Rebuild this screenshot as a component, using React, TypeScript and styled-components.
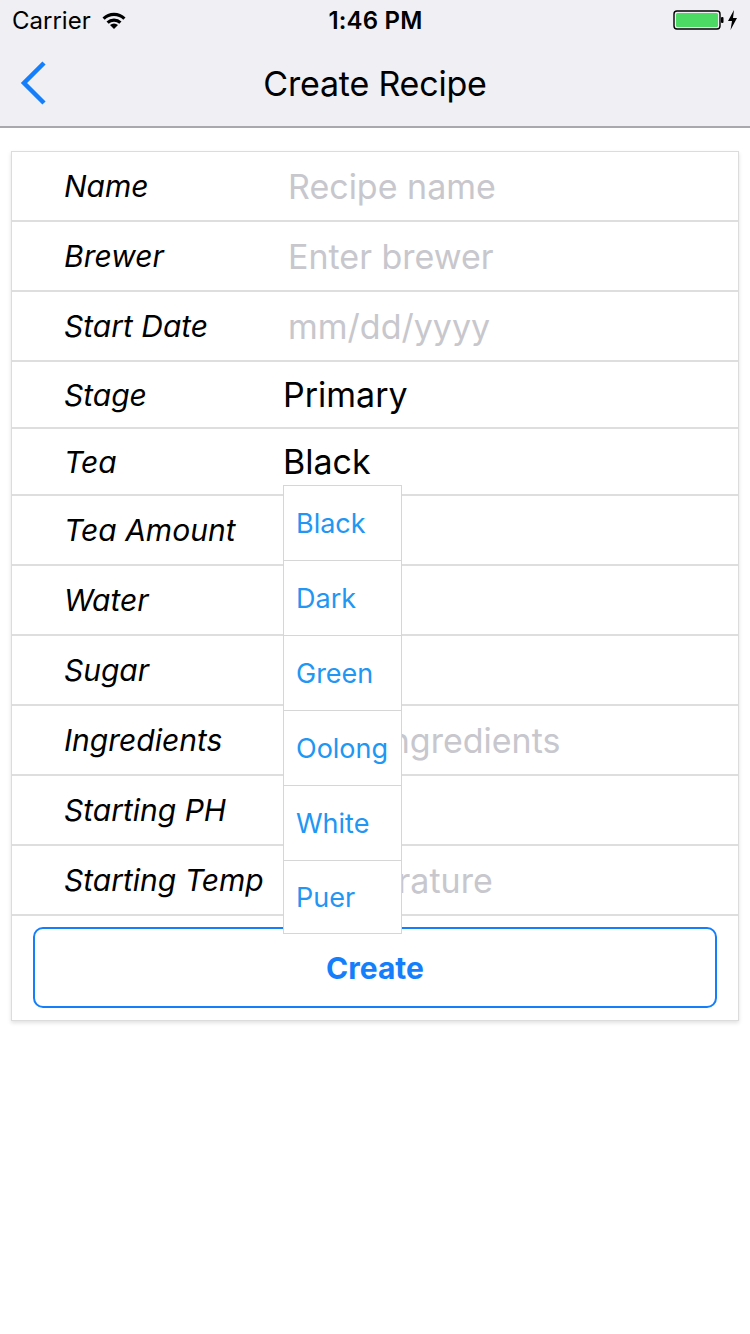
import styled, { createGlobalStyle } from "styled-components";

const GlobalStyle = createGlobalStyle`
  html, body {
    margin: 0;
    padding: 0;
    background: #ffffff;
    font-family: Inter, "Noto Sans", "Liberation Sans", sans-serif;
  }
  * { box-sizing: border-box; }
`;

const BLUE = "#147efb";
const MENU_BLUE = "#2196f3";

const Screen = styled.div`
  width: 750px;
  min-height: 1334px;
  background: #fff;
`;

const Header = styled.header`
  background: #efeff4;
  border-bottom: 2px solid #a9a9ad;
`;

const StatusBar = styled.div`
  height: 40px;
  display: grid;
  grid-template-columns: 1fr auto 1fr;
  align-items: center;
  padding: 0 11px 0 12px;
  font-size: 24px;
  color: #000;
`;

const Carrier = styled.div`
  display: flex;
  align-items: center;
  gap: 10px;
`;

const Clock = styled.div`
  font-weight: 600;
  font-size: 24px;
  letter-spacing: 0.2px;
`;

const Power = styled.div`
  display: flex;
  justify-content: flex-end;
  align-items: center;
  gap: 6px;
`;

const NavBar = styled.div`
  height: 86px;
  display: grid;
  grid-template-columns: 80px 1fr 80px;
  align-items: center;
`;

const BackButton = styled.button`
  border: 0;
  background: none;
  padding: 0 0 0 18px;
  height: 50px;
  display: flex;
  align-items: center;
  cursor: pointer;
`;

const Title = styled.h1`
  margin: 0;
  text-align: center;
  font-size: 34px;
  font-weight: 400;
  color: #000;
  letter-spacing: -0.2px;
`;

const Content = styled.main`
  padding: 23px 11px 0;
`;

const Card = styled.section`
  border: 1px solid #dcdcdc;
  background: #fff;
  box-shadow: 0 2px 4px rgba(0, 0, 0, 0.12);
`;

const Row = styled.div<{ $h: number }>`
  display: grid;
  grid-template-columns: 271px 1fr;
  align-items: center;
  height: ${(p) => p.$h}px;
  border-bottom: 2px solid #dedede;
`;

const Label = styled.div`
  padding-left: 52px;
  font-size: 30px;
  font-style: italic;
  color: #000;
  white-space: nowrap;
`;

const Input = styled.input`
  border: 0;
  outline: none;
  background: transparent;
  font-family: inherit;
  font-size: 34px;
  padding: 0 0 0 5px;
  width: 100%;
  color: #000;
  &::placeholder {
    color: #c7c7cd;
  }
`;

const SelectCell = styled.div`
  position: relative;
  height: 100%;
  display: flex;
  align-items: center;
`;

const Value = styled.div`
  font-size: 34px;
  color: #000;
`;

const Menu = styled.ul`
  position: absolute;
  left: 0;
  top: 56px;
  width: 119px;
  margin: 0;
  padding: 0;
  list-style: none;
  background: #fff;
  border: 1px solid #d6d6d6;
  z-index: 5;
`;

const MenuItem = styled.li`
  height: 75px;
  display: flex;
  align-items: center;
  padding-left: 12px;
  font-size: 27px;
  color: ${MENU_BLUE};
  border-bottom: 1px solid #d6d6d6;
  &:last-child {
    height: 72px;
    border-bottom: 0;
  }
`;

const Actions = styled.div`
  padding: 11px 21px 12px;
`;

const CreateButton = styled.button`
  width: 100%;
  height: 81px;
  border: 2px solid ${BLUE};
  border-radius: 10px;
  background: #fff;
  color: ${BLUE};
  font-family: inherit;
  font-size: 30px;
  font-weight: 700;
  cursor: pointer;
`;

const WifiIcon = () => (
  <svg width="26" height="20" viewBox="0 0 26 20">
    <path d="M13 19 L9 15 A6 6 0 0 1 17 15 Z" fill="#000" />
    <path d="M5.5 11.5 A11 11 0 0 1 20.5 11.5 L18.3 13.7 A8 8 0 0 0 7.7 13.7 Z" fill="#000" />
    <path d="M1.5 7.5 A16.5 16.5 0 0 1 24.5 7.5 L22.3 9.7 A13.5 13.5 0 0 0 3.7 9.7 Z" fill="#000" />
  </svg>
);

const Battery = () => (
  <svg width="66" height="22" viewBox="0 0 66 22">
    <rect x="1" y="2" width="46" height="18" rx="3" fill="none" stroke="#000" strokeWidth="1.4" />
    <rect x="3" y="4" width="42" height="14" rx="1.5" fill="#4cd964" />
    <rect x="48" y="8" width="2.5" height="6" rx="1" fill="#000" />
    <path d="M61 1 L55 12 H59 L57.5 21 L64 9 H60 Z" fill="#000" />
  </svg>
);

const Chevron = () => (
  <svg width="30" height="44" viewBox="0 0 30 44">
    <polyline points="26,2 6,22 26,42" fill="none" stroke={BLUE} strokeWidth="4.5" />
  </svg>
);

const textFields = [
  { label: "Name", placeholder: "Recipe name" },
  { label: "Brewer", placeholder: "Enter brewer" },
  { label: "Start Date", placeholder: "mm/dd/yyyy" },
];

const lowerFields = [
  { label: "Tea Amount", placeholder: "" },
  { label: "Water", placeholder: "" },
  { label: "Sugar", placeholder: "" },
  { label: "Ingredients", placeholder: "Enter ingredients" },
  { label: "Starting PH", placeholder: "" },
  { label: "Starting Temp", placeholder: "Temperature" },
];

const teas = ["Black", "Dark", "Green", "Oolong", "White", "Puer"];

export default function App() {
  return (
    <Screen>
      <GlobalStyle />
      <Header>
        <StatusBar>
          <Carrier>
            Carrier
            <WifiIcon />
          </Carrier>
          <Clock>1:46 PM</Clock>
          <Power>
            <Battery />
          </Power>
        </StatusBar>
        <NavBar>
          <BackButton aria-label="Back">
            <Chevron />
          </BackButton>
          <Title>Create Recipe</Title>
          <div />
        </NavBar>
      </Header>
      <Content>
        <Card>
          {textFields.map((f) => (
            <Row key={f.label} $h={70}>
              <Label>{f.label}</Label>
              <Input placeholder={f.placeholder} />
            </Row>
          ))}
          <Row $h={67}>
            <Label>Stage</Label>
            <SelectCell>
              <Value>Primary</Value>
            </SelectCell>
          </Row>
          <Row $h={67}>
            <Label>Tea</Label>
            <SelectCell>
              <Value>Black</Value>
              <Menu>
                {teas.map((t) => (
                  <MenuItem key={t}>{t}</MenuItem>
                ))}
              </Menu>
            </SelectCell>
          </Row>
          {lowerFields.map((f) => (
            <Row key={f.label} $h={70}>
              <Label>{f.label}</Label>
              <Input placeholder={f.placeholder} />
            </Row>
          ))}
          <Actions>
            <CreateButton>Create</CreateButton>
          </Actions>
        </Card>
      </Content>
    </Screen>
  );
}
